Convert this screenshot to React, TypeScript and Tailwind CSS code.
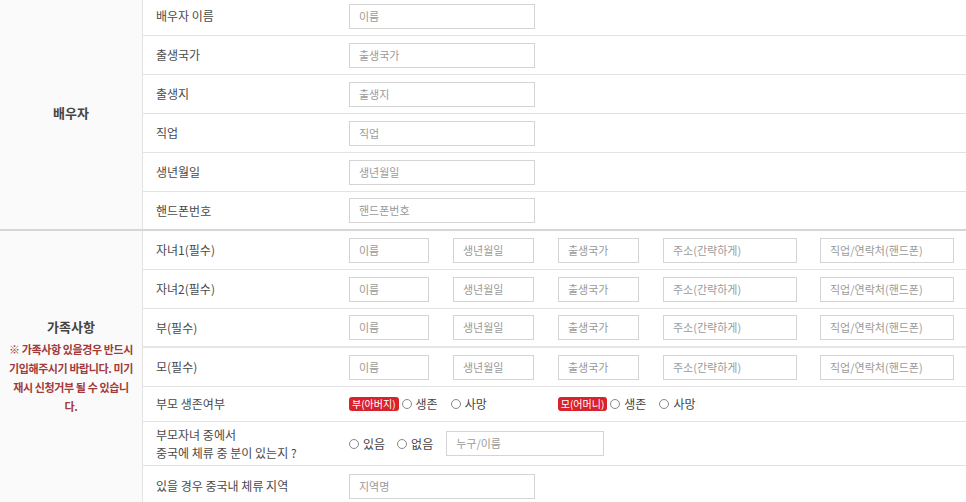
import React from "react";

const font = { fontFamily: '"Noto Sans CJK KR", "Noto Sans", sans-serif' };

function Input({ ph, w }: { ph: string; w: string }) {
  return (
    <div className={`h-[25px] ${w} border border-[#d4d4d4] bg-white flex items-center pl-[9px] text-[11px] text-[#9a9a9a] shrink-0`}>
      {ph}
    </div>
  );
}

function Radio({ label }: { label: string }) {
  return (
    <div className="flex items-center gap-[4px] text-[12px] text-[#444]">
      <span className="w-[10px] h-[10px] rounded-full border border-[#888] bg-white" />
      <span>{label}</span>
    </div>
  );
}

function Badge({ t }: { t: string }) {
  return (
    <span className="h-[14px] px-[3px] rounded-[3px] bg-[#d8222c] text-white text-[10px] leading-[14px] flex items-center">
      {t}
    </span>
  );
}

function Row({
  label,
  children,
  h = "h-[39px]",
  border = "border-b border-[#e3e3e3]",
}: {
  label: React.ReactNode;
  children?: React.ReactNode;
  h?: string;
  border?: string;
}) {
  return (
    <div className={`flex ${h} ${border}`}>
      <div className="w-[206px] pl-[13px] flex items-center text-[12px] text-[#4a4a4a] leading-[18px] shrink-0">{label}</div>
      <div className="flex-1 flex items-center">{children}</div>
    </div>
  );
}

function MultiInputs() {
  return (
    <div className="flex items-center">
      <Input ph="이름" w="w-[80px]" />
      <div className="ml-[24px]"><Input ph="생년월일" w="w-[81px]" /></div>
      <div className="ml-[24px]"><Input ph="출생국가" w="w-[81px]" /></div>
      <div className="ml-[24px]"><Input ph="주소(간략하게)" w="w-[134px]" /></div>
      <div className="ml-[23px]"><Input ph="직업/연락처(핸드폰)" w="w-[134px]" /></div>
    </div>
  );
}

export default function App() {
  return (
    <div className="w-[966px] h-[502px] overflow-hidden bg-white" style={font}>
      <div className="mt-[-3px]">
        {/* 배우자 */}
        <div className="flex border-b-2 border-[#d6d6d6]">
          <div className="w-[143px] bg-[#fafafa] border-r border-[#e3e3e3] flex items-center justify-center text-[13px] font-bold text-[#444] shrink-0">
            배우자
          </div>
          <div className="flex-1">
            <Row label="배우자 이름"><Input ph="이름" w="w-[186px]" /></Row>
            <Row label="출생국가"><Input ph="출생국가" w="w-[186px]" /></Row>
            <Row label="출생지"><Input ph="출생지" w="w-[186px]" /></Row>
            <Row label="직업"><Input ph="직업" w="w-[186px]" /></Row>
            <Row label="생년월일"><Input ph="생년월일" w="w-[186px]" /></Row>
            <Row label="핸드폰번호" h="h-[37px]" border=""><Input ph="핸드폰번호" w="w-[186px]" /></Row>
          </div>
        </div>
        {/* 가족사항 */}
        <div className="flex">
          <div className="w-[143px] bg-[#fafafa] border-r border-[#e3e3e3] flex flex-col items-center justify-center shrink-0 pb-[4px]">
            <div className="text-[13px] font-bold text-[#444] mb-[4px]">가족사항</div>
            <div className="text-[11px] font-bold text-[#a23a3a] leading-[19px] text-center tracking-[-0.4px]">
              ※ 가족사항 있을경우 반드시
              <br />
              기입해주시기 바랍니다. 미기
              <br />
              재시 신청거부 될 수 있습니
              <br />
              다.
            </div>
          </div>
          <div className="flex-1">
            <Row label="자녀1(필수)"><MultiInputs /></Row>
            <Row label="자녀2(필수)"><MultiInputs /></Row>
            <Row label="부(필수)" border="border-b-2 border-[#e6e6e6]"><MultiInputs /></Row>
            <Row label="모(필수)"><MultiInputs /></Row>
            <Row label="부모 생존여부" h="h-[35px]">
              <div className="flex items-center">
                <Badge t="부(아버지)" />
                <div className="ml-[3px]"><Radio label="생존" /></div>
                <div className="ml-[13px]"><Radio label="사망" /></div>
                <div className="ml-[71px]"><Badge t="모(어머니)" /></div>
                <div className="ml-[3px]"><Radio label="생존" /></div>
                <div className="ml-[13px]"><Radio label="사망" /></div>
              </div>
            </Row>
            <Row
              label={
                <span>
                  부모자녀 중에서
                  <br />
                  중국에 체류 중 분이 있는지 ?
                </span>
              }
              h="h-[44px]"
            >
              <div className="flex items-center">
                <Radio label="있음" />
                <div className="ml-[12px]"><Radio label="없음" /></div>
                <div className="ml-[13px]"><Input ph="누구/이름" w="w-[158px]" /></div>
              </div>
            </Row>
            <Row label="있을 경우 중국내 체류 지역" h="h-[40px]" border="">
              <Input ph="지역명" w="w-[186px]" />
            </Row>
          </div>
        </div>
      </div>
    </div>
  );
}
